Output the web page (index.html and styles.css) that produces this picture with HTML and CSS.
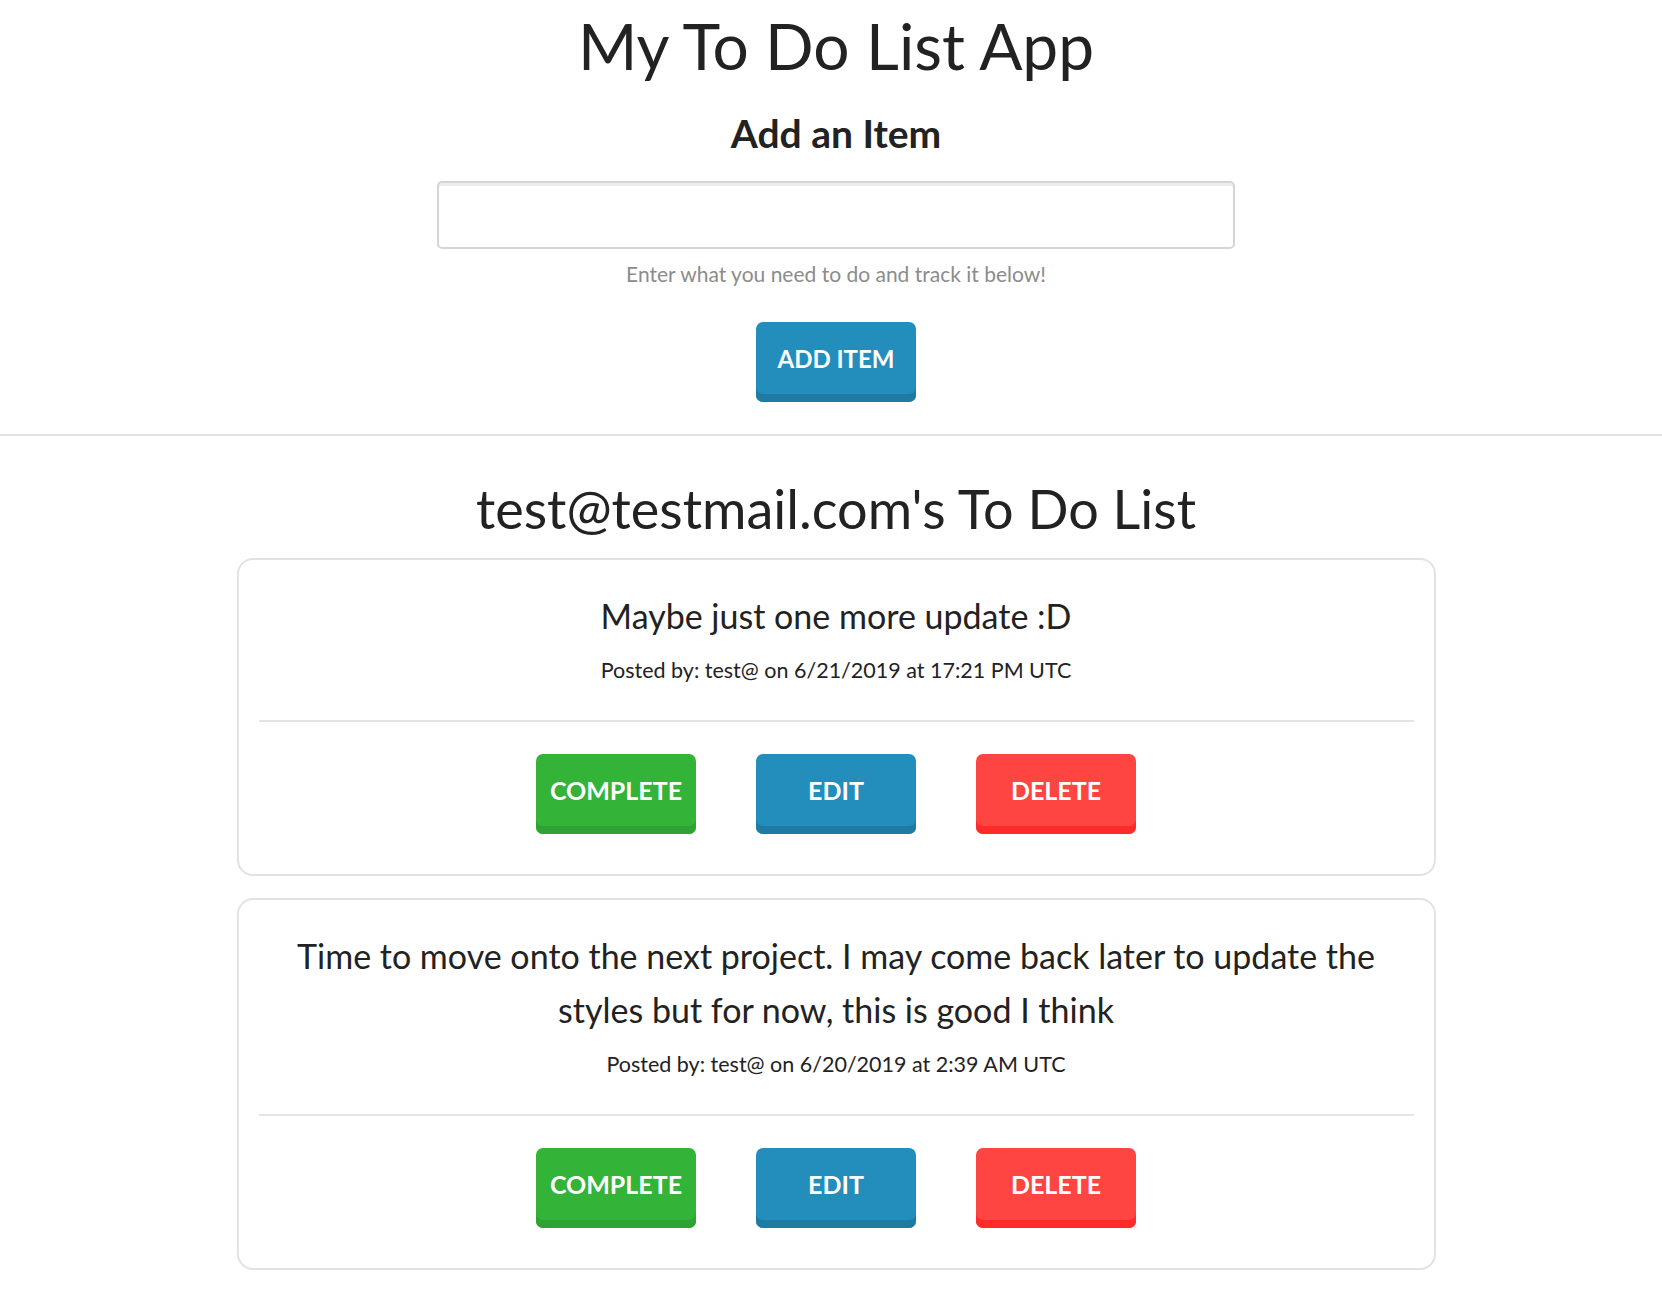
FILE: index.html
```html
<!DOCTYPE html>
<html lang="en">
<head>
<meta charset="utf-8">
<title>My To Do List App</title>
<link rel="stylesheet" href="styles.css">
</head>
<body>
<header class="header">
  <h1 class="app-title">My To Do List App</h1>
  <h2 class="form-title">Add an Item</h2>
  <form class="add-form">
    <input class="add-input" type="text" aria-label="New item">
    <p class="help">Enter what you need to do and track it below!</p>
    <button class="btn btn-blue" type="button">Add Item</button>
  </form>
</header>
<main class="list">
  <h2 class="list-title">test@testmail.com's To Do List</h2>
  <section class="card">
    <p class="card-text">Maybe just one more update :D</p>
    <p class="card-meta">Posted by: test@ on 6/21/2019 at 17:21 PM UTC</p>
    <div class="card-actions">
      <button class="btn btn-green" type="button">Complete</button>
      <button class="btn btn-blue" type="button">Edit</button>
      <button class="btn btn-red" type="button">Delete</button>
    </div>
  </section>
  <section class="card">
    <p class="card-text">Time to move onto the next project. I may come back later to update the styles but for now, this is good I think</p>
    <p class="card-meta">Posted by: test@ on 6/20/2019 at 2:39 AM UTC</p>
    <div class="card-actions">
      <button class="btn btn-green" type="button">Complete</button>
      <button class="btn btn-blue" type="button">Edit</button>
      <button class="btn btn-red" type="button">Delete</button>
    </div>
  </section>
</main>
</body>
</html>
```

FILE: styles.css
```css
* { box-sizing: border-box; }

html, body {
  margin: 0;
  padding: 0;
  background: #ffffff;
}

body {
  font-family: Lato, "Liberation Sans", sans-serif;
  color: #222222;
}

.header {
  padding: 6px 0 32px 10px;
  border-bottom: 2px solid #e3e3e3;
  text-align: center;
}

.app-title {
  margin: 0;
  font-size: 64px;
  line-height: 80px;
  font-weight: 400;
}

.form-title {
  margin: 23px 0 0;
  font-size: 39px;
  line-height: 48px;
  font-weight: 700;
}

.add-form {
  display: flex;
  flex-direction: column;
  align-items: center;
  margin-top: 24px;
}

.add-input {
  width: 798px;
  height: 68px;
  border: 2px solid #d3d5d8;
  border-radius: 5px;
  box-shadow: inset 0 3px 0 #ebecee;
  font: inherit;
  font-size: 24px;
  padding: 0 14px;
}

.help {
  margin: 10px 0 0;
  font-size: 21px;
  line-height: 30px;
  color: #8c8c8c;
}

.btn {
  width: 160px;
  height: 80px;
  border: 0;
  border-radius: 7px;
  padding: 0 0 8px;
  font-family: inherit;
  font-size: 25px;
  font-weight: 700;
  text-transform: uppercase;
  color: #ffffff;
  cursor: pointer;
}

.add-form .btn {
  margin-top: 33px;
  font-size: 24px;
}

.btn-blue {
  background: #238ebb;
  box-shadow: inset 0 -8px 0 #1f7ba1;
}

.btn-green {
  background: #33b337;
  box-shadow: inset 0 -8px 0 #2ea232;
}

.btn-red {
  background: #fe4541;
  box-shadow: inset 0 -8px 0 #ff2b2b;
}

.list {
  padding: 0 0 30px 10px;
  display: flex;
  flex-direction: column;
  align-items: center;
}

.list-title {
  margin: 39px 0 15px;
  font-size: 54px;
  line-height: 68px;
  font-weight: 400;
  text-align: center;
}

.card {
  width: 1199px;
  border: 2px solid #e2e2e2;
  border-radius: 16px;
  padding: 29px 20px 0;
  text-align: center;
}

.card + .card {
  margin-top: 22px;
}

.card-text {
  margin: 0;
  padding: 0 28px;
  font-size: 34px;
  line-height: 54px;
}

.card-meta {
  margin: 9px 0 0;
  padding-bottom: 32px;
  border-bottom: 2px solid #e4e4e4;
  font-size: 21.5px;
  line-height: 36px;
}

.card-actions {
  display: flex;
  justify-content: center;
  gap: 60px;
  padding: 32px 0 40px;
}
```
